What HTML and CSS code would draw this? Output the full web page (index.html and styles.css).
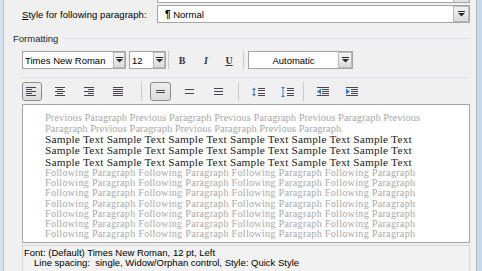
FILE: index.html
```html
<!DOCTYPE html>
<html lang="en">
<head>
  <meta charset="UTF-8" />
  <title>Modify Style</title>
  <link rel="stylesheet" href="styles.css">
</head>
<body>
  <div class="window">
    <div class="frame-left"></div>

    <div class="dialog">
      <div class="prev-combo"><span class="prev-btn"></span></div>

      <div class="style-row">
        <label class="style-label"><u>S</u>tyle for following paragraph:</label>
        <div class="combo style-combo">
          <span class="combo-text"><b class="pilcrow">¶</b>&nbsp;Normal</span>
          <span class="combo-btn btn-16">
            <svg width="7" height="6" viewBox="0 0 7 6"><rect x="0" y="0" width="7" height="1"/><polygon points="0,2 7,2 3.5,5.5"/></svg>
          </span>
        </div>
      </div>

      <div class="group-title"><span>Formatting</span><span class="group-line"></span></div>

      <div class="toolbar row-font">
        <div class="combo font-combo">
          <span class="combo-text">Times New Roman</span>
          <span class="combo-btn btn-12">
            <svg width="7" height="6" viewBox="0 0 7 6"><rect x="0" y="0" width="7" height="1"/><polygon points="0,2 7,2 3.5,5.5"/></svg>
          </span>
        </div>
        <div class="combo size-combo">
          <span class="combo-text">12</span>
          <span class="combo-btn btn-12">
            <svg width="7" height="6" viewBox="0 0 7 6"><rect x="0" y="0" width="7" height="1"/><polygon points="0,2 7,2 3.5,5.5"/></svg>
          </span>
        </div>
        <span class="vsep"></span>
        <span class="tbtn tb-b">B</span>
        <span class="tbtn tb-i">I</span>
        <span class="tbtn tb-u">U</span>
        <span class="vsep vsep-color"></span>
        <div class="combo color-combo">
          <span class="combo-text centered">Automatic</span>
          <span class="combo-btn btn-14">
            <svg width="7" height="6" viewBox="0 0 7 6"><rect x="0" y="0" width="7" height="1"/><polygon points="0,2 7,2 3.5,5.5"/></svg>
          </span>
        </div>
      </div>

      <div class="row-sep"></div>

      <div class="toolbar row-para">
        <!-- alignment -->
        <span class="pbtn align-btn on">
          <svg width="10" height="9" viewBox="0 0 10 9"><path d="M0 0h10v1H0zM0 2h6v1H0zM0 4h10v1H0zM0 6h6v1H0zM0 8h10v1H0z"/></svg>
        </span>
        <span class="pbtn align-btn">
          <svg width="10" height="9" viewBox="0 0 10 9"><path d="M0 0h10v1H0zM2 2h6v1H2zM0 4h10v1H0zM2 6h6v1H2zM0 8h10v1H0z"/></svg>
        </span>
        <span class="pbtn align-btn">
          <svg width="10" height="9" viewBox="0 0 10 9"><path d="M0 0h10v1H0zM4 2h6v1H4zM0 4h10v1H0zM4 6h6v1H4zM0 8h10v1H0z"/></svg>
        </span>
        <span class="pbtn align-btn">
          <svg width="10" height="9" viewBox="0 0 10 9"><path d="M0 0h10v1H0zM0 2h10v1H0zM0 4h10v1H0zM0 6h10v1H0zM0 8h10v1H0z"/></svg>
        </span>
        <span class="vsep vsep-para"></span>

        <!-- line spacing -->
        <span class="pbtn space-btn first on">
          <svg width="9" height="9" viewBox="0 0 9 9"><path d="M0 3h9v1H0zM0 5h9v1H0z"/></svg>
        </span>
        <span class="pbtn space-btn">
          <svg width="9" height="9" viewBox="0 0 9 9"><path d="M0 2h9v1H0zM0 6h9v1H0z"/></svg>
        </span>
        <span class="pbtn space-btn">
          <svg width="9" height="9" viewBox="0 0 9 9"><path d="M0 1h9v1H0zM0 4h9v1H0zM0 7h9v1H0z"/></svg>
        </span>
        <span class="vsep vsep-space"></span>

        <!-- paragraph spacing -->
        <span class="pbtn space-btn first">
          <svg width="13" height="10" viewBox="0 0 13 10">
            <path d="M6 1h7v1H6zM6 3h7v1H6zM6 6h7v1H6zM6 8h7v1H6z"/>
            <polygon class="blue" points="0,3 2,0.5 4,3"/>
            <rect class="blue" x="1.5" y="3" width="1" height="4"/>
            <polygon class="blue" points="0,7 4,7 2,9.5"/>
          </svg>
        </span>
        <span class="pbtn space-btn">
          <svg width="13" height="10" viewBox="0 0 13 10">
            <path d="M6 1h7v1H6zM6 3h7v1H6zM6 6h7v1H6zM6 8h7v1H6z"/>
            <polygon class="blue" points="0,0 4,0 2,2.5"/>
            <rect class="blue" x="1.5" y="2.5" width="1" height="5"/>
            <polygon class="blue" points="0,10 2,7.5 4,10"/>
          </svg>
        </span>
        <span class="vsep vsep-indent"></span>

        <!-- indent -->
        <span class="pbtn space-btn first">
          <svg width="12" height="9" viewBox="0 0 12 9">
            <path d="M0 0h12v1H0zM5 2h7v1H5zM5 4h7v1H5zM5 6h7v1H5zM0 8h12v1H0z"/>
            <polygon class="blue" points="4,1.5 0,4.5 4,7.5"/>
          </svg>
        </span>
        <span class="pbtn space-btn">
          <svg width="12" height="9" viewBox="0 0 12 9">
            <path d="M0 0h12v1H0zM5 2h7v1H5zM5 4h7v1H5zM5 6h7v1H5zM0 8h12v1H0z"/>
            <polygon class="blue" points="0,1.5 4,4.5 0,7.5"/>
          </svg>
        </span>
      </div>

      <div class="preview">
        <div class="para-prev">
          <div>Previous Paragraph Previous Paragraph Previous Paragraph Previous Paragraph Previous</div>
          <div>Paragraph Previous Paragraph Previous Paragraph Previous Paragraph</div>
        </div>
        <div class="para-sample">
          <div>Sample Text Sample Text Sample Text Sample Text Sample Text Sample Text</div>
          <div>Sample Text Sample Text Sample Text Sample Text Sample Text Sample Text</div>
          <div>Sample Text Sample Text Sample Text Sample Text Sample Text Sample Text</div>
        </div>
        <div class="para-follow">
          <div>Following Paragraph Following Paragraph Following Paragraph Following Paragraph</div>
          <div>Following Paragraph Following Paragraph Following Paragraph Following Paragraph</div>
          <div>Following Paragraph Following Paragraph Following Paragraph Following Paragraph</div>
          <div>Following Paragraph Following Paragraph Following Paragraph Following Paragraph</div>
          <div>Following Paragraph Following Paragraph Following Paragraph Following Paragraph</div>
          <div>Following Paragraph Following Paragraph Following Paragraph Following Paragraph</div>
          <div>Following Paragraph Following Paragraph Following Paragraph Following Paragraph</div>
        </div>
      </div>

      <div class="description">
        <div class="desc-line">Font: (Default) Times New Roman, 12 pt, Left</div>
        <div class="desc-line indent">Line spacing:&nbsp; single, Widow/Orphan control, Style: Quick Style</div>
      </div>
    </div>

    <div class="frame-right"></div>
  </div>
</body>
</html>
```

FILE: styles.css
```css
body {
  margin: 0;
  width: 482px;
  height: 271px;
  overflow: hidden;
  font-family: "Liberation Sans", Arial, sans-serif;
  font-size: 9.5px;
  color: #000;
  background: #f0f0f0;
}

.window {
  display: flex;
  height: 271px;
}

.frame-left {
  width: 4px;
  background: linear-gradient(to right, #d6e2ee 0 3px, #b7c5d3 3px);
}

.frame-right {
  width: 6px;
  background: linear-gradient(to right, #a9b4bf 0 1px, #c6d8ec 1px);
}

.dialog {
  width: 472px;
  background: #f0f0f0;
}

/* combobox above, cut off by the top edge */
.prev-combo {
  display: flex;
  justify-content: flex-end;
  box-sizing: border-box;
  width: 313px;
  height: 3px;
  margin-left: 153px;
  border: 1px solid #a5a5a5;
  border-top: none;
  background: #fff;
}

.prev-btn {
  width: 16px;
  box-sizing: border-box;
  border-left: 1px solid #b4b4b4;
  background: #e2e2e2;
}

.style-row {
  display: flex;
  align-items: center;
  height: 18px;
  margin-top: 2px;
  padding-left: 18px;
}

.style-label {
  width: 135px;
  letter-spacing: 0.05px;
}

.combo {
  display: flex;
  box-sizing: border-box;
  height: 18px;
  border: 1px solid #a5a5a5;
  background: #fff;
}

.combo-text {
  flex: 1;
  display: flex;
  align-items: center;
  padding-left: 2px;
  white-space: nowrap;
}

.combo-text.centered {
  justify-content: center;
  padding-left: 0;
}

.combo-btn {
  display: flex;
  align-items: center;
  justify-content: center;
  box-sizing: border-box;
  border: 1px solid #b9b9b9;
  background: linear-gradient(#f4f4f4, #dadada);
}

.combo-btn svg {
  fill: #2a2a2a;
}

.btn-16 { width: 16px; }
.btn-14 { width: 14px; }
.btn-12 { width: 12px; }

.style-combo {
  width: 313px;
}

.style-combo .combo-text {
  padding-left: 7px;
}

.pilcrow {
  font-size: 10px;
}

.group-title {
  display: flex;
  align-items: center;
  height: 12px;
  margin-top: 9px;
  padding-left: 9px;
  color: #222;
}

.group-line {
  flex: 1;
  height: 1px;
  margin: 1px 6px 0 5px;
  background: #d9e1e8;
}

.toolbar {
  display: flex;
  align-items: center;
  padding-left: 18px;
}

.row-font {
  height: 18px;
  margin-top: 7px;
}

.font-combo {
  width: 104px;
}

.size-combo {
  width: 37px;
  margin-left: 3px;
}

.color-combo {
  width: 105px;
  margin-left: 4px;
}

.vsep {
  width: 1px;
  height: 18px;
  margin-left: 2px;
  background: #c9c9c9;
}

.vsep-color { margin-left: 4px; }

.tbtn {
  display: flex;
  align-items: center;
  justify-content: center;
  width: 20px;
  height: 18px;
  font-family: "Liberation Serif", "Times New Roman", serif;
  font-weight: bold;
  font-size: 10px;
  color: #3a3340;
}

.tb-b { margin-left: 3px; }
.tb-i { margin-left: 4px; font-style: italic; }
.tb-u { margin-left: 3px; text-decoration: underline; }

.row-sep {
  height: 1px;
  margin: 8px 6px 0 18px;
  background: #dfe3e8;
}

.row-para {
  height: 19px;
  margin-top: 4px;
}

.pbtn {
  display: flex;
  align-items: center;
  box-sizing: border-box;
  width: 20px;
  height: 19px;
  margin-left: 8px;
  border: 1px solid transparent;
  border-radius: 3px;
}

.pbtn svg {
  fill: #4b4350;
}

.pbtn svg .blue {
  fill: #3a7dd6;
}

.pbtn.on {
  border-color: #8c8c8c;
  background: linear-gradient(#eeeeee, #dcdcdc);
}

.align-btn {
  padding-left: 3px;
  margin-left: 9px;
}

.align-btn:first-child {
  margin-left: 0;
}

.space-btn {
  width: 21px;
  justify-content: center;
}

.vsep-para { height: 19px; margin-left: 12px; }
.vsep-space { height: 19px; margin-left: 9px; }
.vsep-indent { height: 19px; margin-left: 5px; }

.vsep-para + .space-btn { margin-left: 8px; }
.vsep-space + .space-btn { margin-left: 9px; }

.preview {
  box-sizing: border-box;
  width: 448px;
  height: 139px;
  margin: 3px 0 0 18px;
  padding: 7px 0 0 22px;
  border: 1px solid #a5a5a5;
  background: #fff;
  overflow: hidden;
  font-family: "Liberation Serif", "Times New Roman", serif;
  white-space: nowrap;
}

.para-prev {
  font-size: 10.5px;
  line-height: 11px;
  color: #a9a9a9;
}

.para-sample {
  font-size: 11.3px;
  line-height: 11.3px;
  letter-spacing: 0.2px;
  color: #1c1c1c;
}

.para-follow {
  font-size: 10.2px;
  line-height: 10.2px;
  letter-spacing: 0.25px;
  color: #a9a9a9;
}

.description {
  box-sizing: border-box;
  width: 448px;
  height: 26px;
  margin: 2px 0 0 18px;
  padding: 2px 0 0 1px;
  border: 1px solid #d6d6d6;
  border-bottom: none;
  background: #f2f2f2;
}

.desc-line {
  line-height: 10px;
  white-space: nowrap;
}

.desc-line.indent {
  padding-left: 10px;
}
```
